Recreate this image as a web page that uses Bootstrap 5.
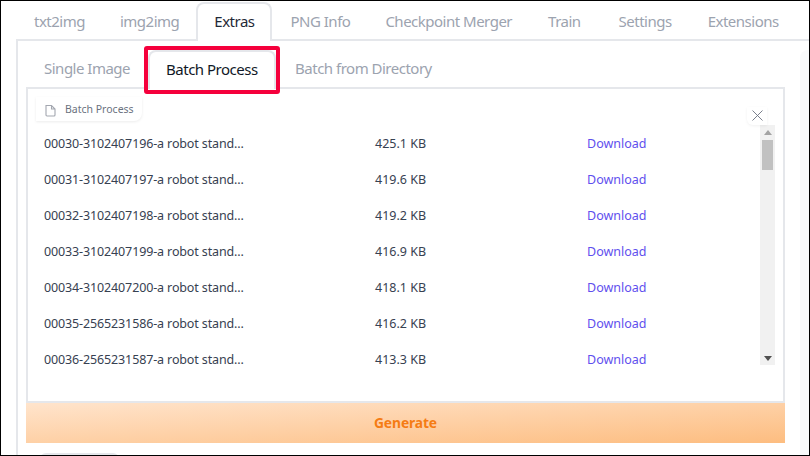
<!doctype html>
<html lang="en">
<head>
<meta charset="utf-8">
<title>Extras</title>
<link href="https://cdn.jsdelivr.net/npm/bootstrap@5.3.0/dist/css/bootstrap.min.css" rel="stylesheet">
<style>
html,body{height:100%;overflow:hidden}
body{font-family:"Noto Sans","Liberation Sans",sans-serif;color:#374151;background:#fff;border:1px solid #000;height:456px;width:810px;box-sizing:border-box}
.tabs-top{height:38px;padding:1px 0 0 15px;display:flex}
.ttab{font-size:15px;color:#9ca3af;line-height:39px;padding:0 18px;white-space:nowrap;letter-spacing:-.5px}
.ttab.on{color:#1f2937;background:#fff;border:2px solid #e5e7eb;border-bottom:0;border-radius:8px 8px 0 0;height:39px;position:relative;z-index:2;padding:0 16px;line-height:35px}
.pull-1{margin-left:-1px}
.push-2{margin-left:2px}
.panel-main{margin-left:15px;border:solid #e5e7eb;border-width:2px 0 0 2px;height:420px;display:flex}
.main-col{width:767px;margin-right:15px;padding:9px 0 0 8px;flex:none}
.rail{flex:1;margin-top:9px;background:#f9fafb;border-radius:8px 0 0 0}
.tabs-sub{display:flex;height:39px;margin-bottom:-2px}
.stab{font-size:15px;color:#9ca3af;padding:0 18px;line-height:37px;white-space:nowrap;letter-spacing:-.5px}
.stab.on{color:#111827;background:#fff;border:2px solid #e5e7eb;border-bottom:0;border-radius:8px 8px 0 0;position:relative;z-index:2;width:128px;padding:0 16px;line-height:35px;height:39px}
.stab.far{padding-left:19px}
.red-mark{position:absolute;left:-6px;right:-6px;top:-6px;bottom:-5px;border:4px solid #f5003c;border-radius:3px}
.drop-box{border:2px solid #e5e7eb;height:316px;position:relative;background:#fff;padding:36px 8px 0 0}
.file-chip{position:absolute;left:8px;top:8px;height:24px;width:106px;display:flex;align-items:center;gap:9px;padding:2px 0 0 9px;font-size:10.5px;color:#6b7280;border-radius:0 0 8px 0;box-shadow:0 1px 3px rgba(0,0,0,.08)}
.close-x{position:absolute;right:16px;top:18px;width:20px;height:18px;padding-bottom:2px;display:flex;align-items:center;justify-content:center;border-radius:0 0 0 6px;box-shadow:0 1px 3px rgba(0,0,0,.06)}
.file-scroll{height:240px;display:flex;justify-content:space-between}
.file-list{padding-top:1px}
.file-row{height:36px;display:flex;align-items:center;font-size:12.5px;color:#374151;padding-left:16px}
.fname{width:331px;white-space:nowrap;letter-spacing:-.13px}
.fsize{width:212px;white-space:nowrap}
.fdl{color:#5f50ee;text-decoration:none;white-space:nowrap}
.sbar{width:15px;height:100%;background:#f1f1f1;display:flex;flex-direction:column;align-items:center;justify-content:space-between;padding:0 2px;flex:none}
.sthumb{width:11px;height:30px;background:#c1c1c1;position:relative}
.stop-group{display:flex;flex-direction:column;align-items:center;gap:5px;padding-top:5px}
.sarr{width:0;height:0;border-left:4px solid transparent;border-right:4px solid transparent}
.sarr.up{border-bottom:5px solid #a3a3a3}
.sarr.dn{border-top:5px solid #505050;margin-bottom:4px}
.gen-btn{height:40px;width:759px;border:0;border-radius:0;background:linear-gradient(to bottom right,#ffe4cc,#fdbd80);color:#f57c14;font-weight:700;font-size:13.8px;letter-spacing:-.1px;display:flex;align-items:center;justify-content:center}
.stub{height:8px;width:79px;background:#e5e7eb;border-radius:6px 6px 0 0;margin:10px 0 0 14px}
</style>
</head>
<body>
<nav class="tabs-top">
<span class="ttab">txt2img</span><span class="ttab pull-1">img2img</span><span class="ttab on pull-1">Extras</span><span class="ttab">PNG Info</span><span class="ttab pull-1">Checkpoint Merger</span><span class="ttab">Train</span><span class="ttab push-2">Settings</span><span class="ttab">Extensions</span>
</nav>
<div class="panel-main">
<main class="main-col">
<div class="tabs-sub"><span class="stab">Single Image</span><span class="stab on">Batch Process<span class="red-mark"></span></span><span class="stab far">Batch from Directory</span></div>
<div class="drop-box">
<div class="file-chip"><svg width="11" height="13" viewBox="0 0 11 13" fill="none" stroke="#a3a7b0" stroke-width="1.1"><path d="M1 1.5h5.5l3.5 3.5v6a1 1 0 0 1-1 1H2a1 1 0 0 1-1-1zM6.5 1.5V5H10"/></svg><span>Batch Process</span></div>
<div class="close-x"><svg width="11" height="11" viewBox="0 0 11 11" stroke="#6b7280" stroke-width=".9"><path d="M.5.5l10 10M10.5.5l-10 10"/></svg></div>
<div class="file-scroll">
<div class="file-list">
<div class="file-row"><span class="fname">00030-3102407196-a robot stand...</span><span class="fsize">425.1 KB</span><a class="fdl" href="#">Download</a></div>
<div class="file-row"><span class="fname">00031-3102407197-a robot stand...</span><span class="fsize">419.6 KB</span><a class="fdl" href="#">Download</a></div>
<div class="file-row"><span class="fname">00032-3102407198-a robot stand...</span><span class="fsize">419.2 KB</span><a class="fdl" href="#">Download</a></div>
<div class="file-row"><span class="fname">00033-3102407199-a robot stand...</span><span class="fsize">416.9 KB</span><a class="fdl" href="#">Download</a></div>
<div class="file-row"><span class="fname">00034-3102407200-a robot stand...</span><span class="fsize">418.1 KB</span><a class="fdl" href="#">Download</a></div>
<div class="file-row"><span class="fname">00035-2565231586-a robot stand...</span><span class="fsize">416.2 KB</span><a class="fdl" href="#">Download</a></div>
<div class="file-row"><span class="fname">00036-2565231587-a robot stand...</span><span class="fsize">413.3 KB</span><a class="fdl" href="#">Download</a></div>
</div>
<div class="sbar"><div class="stop-group"><span class="sarr up"></span><span class="sthumb"></span></div><span class="sarr dn"></span></div>
</div>
</div>
<button class="gen-btn btn" type="button">Generate</button>
<div class="stub"></div>
</main>
<aside class="rail"></aside>
</div>
<script src="https://cdn.jsdelivr.net/npm/bootstrap@5.3.0/dist/js/bootstrap.bundle.min.js"></script>
</body>
</html>
